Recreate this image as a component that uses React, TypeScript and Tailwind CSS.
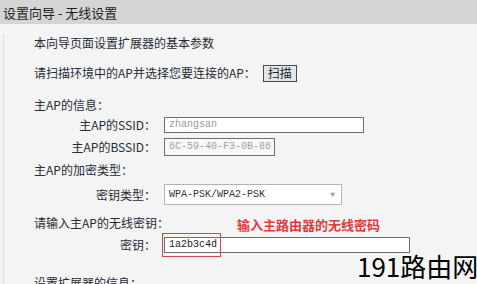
export default function App() {
  const cjk = { fontFamily: '"Noto Sans CJK SC", "Noto Sans", sans-serif' };
  const mono = { fontFamily: '"Liberation Mono", monospace' };

  return (
    <div
      className="relative w-[477px] h-[284px] overflow-hidden bg-[#f4f4f4] text-[#262b36]"
      style={cjk}
    >
      <div className="h-[24px] bg-[#d5d5d5] pl-[3px] flex items-center text-[13px] text-[#1e1e1e] leading-none whitespace-pre">
        设置向导 - 无线设置
      </div>

      <div className="ml-[3px] border-l border-[#dedede] h-[260px] pl-[30px] text-[12px] leading-none">
        <div className="mt-[9px] h-[20px] flex items-center">本向导页面设置扩展器的基本参数</div>

        <div className="mt-[10px] h-[20px] flex items-center">
          <span>请扫描环境中的AP并选择您要连接的AP：</span>
          <button className="ml-[7px] w-[34px] h-[17px] border border-[#4a4a4a] bg-[#dfe6ec] text-[12px] leading-none text-[#1c1c1c]">
            扫描
          </button>
        </div>

        <div className="mt-[12px] h-[20px] flex items-center">主AP的信息：</div>

        <div className="h-[20px] flex items-center">
          <span className="w-[122px] text-right">主AP的SSID：</span>
          <div
            className="ml-[8px] w-[200px] h-[16px] border border-[#6f6f6f] bg-white flex items-center pl-[4px] text-[10px] text-[#9a9a9a]"
            style={mono}
          >
            zhangsan
          </div>
        </div>

        <div className="mt-[2px] h-[20px] flex items-center">
          <span className="w-[122px] text-right">主AP的BSSID：</span>
          <div
            className="ml-[8px] w-[111px] h-[18px] border border-[#6f6f6f] bg-[#f8f8f8] flex items-center pl-[4px] text-[10px] text-[#a0a0a0]"
            style={mono}
          >
            6C-59-40-F3-0B-86
          </div>
        </div>

        <div className="mt-[3px] h-[20px] flex items-center">主AP的加密类型：</div>

        <div className="mt-[4px] h-[21px] flex items-center">
          <span className="w-[122px] text-right">密钥类型：</span>
          <div
            className="ml-[8px] w-[178px] h-[21px] border border-[#b4b4b4] bg-white flex items-center pl-[4px] pr-[6px] text-[10px] text-[#333]"
            style={mono}
          >
            <span className="flex-1">WPA-PSK/WPA2-PSK</span>
            <span className="text-[#9a9a9a] text-[8px]">▼</span>
          </div>
        </div>

        <div className="mt-[8px] h-[20px] flex items-center">
          <span>请输入主AP的无线密钥：</span>
          <span className="ml-[68px] mt-[3px] text-[13px] font-bold text-[#e23a3a]">输入主路由器的无线密码</span>
        </div>

        <div className="mt-[2px] h-[20px] flex items-center">
          <span className="w-[122px] text-right">密钥：</span>
          <div
            className="ml-[8px] w-[246px] h-[16px] border border-[#6f6f6f] bg-white flex items-center pl-[4px] text-[10px] text-[#222]"
            style={mono}
          >
            1a2b3c4d
          </div>
        </div>

        <div className="mt-[18px] h-[20px] flex items-center">设置扩展器的信息：</div>
      </div>

      <div className="absolute left-[162px] top-[233px] w-[59px] h-[24px] border border-[#d24848]" />

      <div className="absolute left-[357px] top-[253px] whitespace-nowrap text-[26px] leading-none text-black">
        191路由网
      </div>
    </div>
  );
}
